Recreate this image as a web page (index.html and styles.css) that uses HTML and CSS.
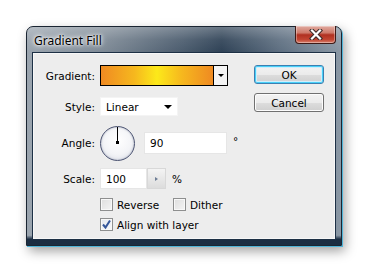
FILE: index.html
```html
<!DOCTYPE html>
<html>
<head>
<meta charset="utf-8">
<title>Gradient Fill</title>
<link rel="stylesheet" href="styles.css">
</head>
<body>
<div class="window">
  <div class="titlebar">
    <span class="title">Gradient Fill</span>
    <div class="close">
      <svg width="16" height="11" viewBox="0 0 16 11"><path d="M4 1.5 L12 9.5 M12 1.5 L4 9.5" stroke="#3a2a28" stroke-width="4.2" stroke-linecap="square"/><path d="M4 1.5 L12 9.5 M12 1.5 L4 9.5" stroke="#ffffff" stroke-width="2.2" stroke-linecap="square"/></svg>
    </div>
  </div>
  <div class="frame">
    <div class="client">
      <div class="form">
        <div class="row r-grad">
          <span class="label">Gradient:</span>
          <div class="swatch"><div class="swatch-fill"></div><div class="swatch-drop"><span class="tri-down"></span></div></div>
        </div>
        <div class="row r-style">
          <span class="label">Style:</span>
          <div class="select"><span>Linear</span><span class="tri-down"></span></div>
        </div>
        <div class="row r-angle">
          <span class="label">Angle:</span>
          <div class="dial"><div class="needle"></div><div class="hub"></div></div>
          <div class="input angle-input">90</div>
          <span class="unit deg">°</span>
        </div>
        <div class="row r-scale">
          <span class="label">Scale:</span>
          <div class="input scale-input">100</div>
          <div class="stepper"><span class="tri-right"></span></div>
          <span class="unit pct">%</span>
        </div>
        <div class="row r-check">
          <span class="check-item first"><span class="box"></span>Reverse</span>
          <span class="check-item"><span class="box"></span>Dither</span>
        </div>
        <div class="row r-check2">
          <span class="check-item"><span class="box checked"><svg width="11" height="11" viewBox="0 0 11 11"><path d="M2 5.5 L4.5 8.5 L9 1.5" stroke="#34569a" stroke-width="2" fill="none"/></svg></span>Align with layer</span>
        </div>
      </div>
      <div class="buttons">
        <div class="btn default">OK</div>
        <div class="btn">Cancel</div>
      </div>
    </div>
  </div>
</div>
</body>
</html>
```

FILE: styles.css
```css
html, body {
  margin: 0;
  padding: 0;
  background: #ffffff;
}
body {
  width: 370px;
  height: 274px;
  overflow: hidden;
  padding: 26px 0 0 26px;
  box-sizing: border-box;
}
.window {
  width: 316px;
  height: 220px;
  box-sizing: border-box;
  border: 1px solid #1a2532;
  border-radius: 7px 7px 0 0;
  background: linear-gradient(90deg, #9ba5af 0%, #7d8995 25%, #4a5b6d 50%, #2f4256 62%, #5d6e80 80%, #8b98a5 100%);
  box-shadow: 1px 1px 0 #4fb4d8, 3px 5px 12px rgba(0,0,0,0.38);
  display: flex;
  flex-direction: column;
}
.titlebar {
  height: 25px;
  display: flex;
  justify-content: space-between;
  align-items: flex-start;
  border-radius: 6px 6px 0 0;
  background: linear-gradient(180deg, rgba(255,255,255,0.28) 0%, rgba(255,255,255,0.08) 50%, rgba(0,0,0,0) 100%);
}
.title {
  font-family: "Noto Sans", "Open Sans", sans-serif;
  font-size: 12px;
  color: #000;
  padding: 5px 0 0 7px;
  text-shadow: 0 0 6px #fff, 0 0 4px #fff, 0 0 2px rgba(255,255,255,0.9);
}
.close {
  width: 41px;
  height: 18px;
  margin: -1px 5px 0 0;
  box-sizing: border-box;
  border: 1px solid #3e1a16;
  border-top: none;
  border-radius: 0 0 4px 4px;
  background: linear-gradient(180deg, #e0aaa0 0%, #cf7a6a 40%, #b03020 52%, #c24532 80%, #d7826e 100%);
  box-shadow: inset 0 0 0 1px rgba(255,255,255,0.35);
  display: flex;
  align-items: center;
  justify-content: center;
}
.frame {
  flex: 1;
  padding: 0 5px 5px 5px;
  display: flex;
  background: linear-gradient(180deg, rgba(0,0,0,0) 0%, rgba(0,0,0,0) 95%, #1b2d42 97%);
}
.client {
  flex: 1;
  border: 1px solid #1d3045;
  box-shadow: inset 0 0 0 1px #f7f7f7;
  background: #ededed;
  display: flex;
  font-family: "DejaVu Sans", Verdana, sans-serif;
  font-size: 10.5px;
  color: #000;
  padding-top: 12px;
  box-sizing: border-box;
}
.form {
  flex: 1;
  display: flex;
  flex-direction: column;
}
.row {
  display: flex;
  align-items: center;
}
.label {
  width: 62px;
  text-align: right;
  margin-right: 5px;
}
.r-grad { height: 21px; }
.r-style { height: 19px; margin-top: 11px; }
.r-angle { height: 36px; margin-top: 9px; }
.r-scale { height: 21px; margin-top: 7px; }
.r-check { height: 13px; margin-top: 9px; padding-left: 67px; }
.r-check2 { height: 13px; margin-top: 7px; padding-left: 67px; }

.swatch {
  width: 128px;
  height: 21px;
  box-sizing: border-box;
  border: 1px solid #000;
  display: flex;
}
.swatch-fill {
  flex: 1;
  background: linear-gradient(90deg, #ef8a22 0%, #f6b81e 30%, #fce91a 50%, #f6b81e 72%, #ef8a22 100%);
}
.swatch-drop {
  width: 13px;
  border-left: 1px solid #000;
  background: #f4f4f4;
  display: flex;
  align-items: center;
  justify-content: center;
}
.tri-down {
  width: 0;
  height: 0;
  border-left: 3px solid transparent;
  border-right: 3px solid transparent;
  border-top: 3px solid #000;
}
.select {
  width: 78px;
  height: 19px;
  box-sizing: border-box;
  background: #fff;
  border: 1px solid #f4f4f4;
  display: flex;
  align-items: center;
  justify-content: space-between;
  padding: 0 5px 0 5px;
}
.select .tri-down {
  border-left-width: 4px;
  border-right-width: 4px;
  border-top-width: 4px;
}
.dial {
  width: 35px;
  height: 35px;
  box-sizing: border-box;
  border-radius: 50%;
  border: 1.5px solid #4d5573;
  background: radial-gradient(circle at 50% 40%, #ffffff 0%, #f3f4f7 55%, #d9dce6 100%);
  box-shadow: inset 0 0 2px rgba(80,90,120,0.5);
  display: flex;
  flex-direction: column;
  align-items: center;
}
.needle {
  width: 1px;
  height: 16px;
  background: #000;
}
.hub {
  width: 3px;
  height: 3px;
  background: #000;
  margin-top: -2px;
}
.input {
  background: #fff;
  border: 1px solid #e6e6e6;
  box-sizing: border-box;
  display: flex;
  align-items: center;
  padding-left: 5px;
}
.angle-input {
  width: 83px;
  height: 22px;
  margin-left: 9px;
}
.deg {
  margin-left: 6px;
  margin-top: -4px;
}
.scale-input {
  width: 47px;
  height: 21px;
}
.stepper {
  width: 19px;
  height: 21px;
  box-sizing: border-box;
  border: 1px solid #d8d8d8;
  background: linear-gradient(180deg, #f4f4f4, #dcdcdc);
  display: flex;
  align-items: center;
  justify-content: center;
}
.tri-right {
  width: 0;
  height: 0;
  border-top: 2.5px solid transparent;
  border-bottom: 2.5px solid transparent;
  border-left: 3px solid #6d7e96;
}
.pct {
  margin-left: 6px;
}
.check-item {
  display: flex;
  align-items: center;
  height: 13px;
}
.check-item.first {
  width: 73px;
}
.box {
  width: 13px;
  height: 13px;
  box-sizing: border-box;
  border: 1px solid #8e8f8f;
  background: linear-gradient(135deg, #dedede 0%, #f4f4f4 100%);
  box-shadow: inset 0 0 0 1px #f8f8f8;
  margin-right: 4px;
  display: flex;
  align-items: center;
  justify-content: center;
}
.box.checked {
  background: linear-gradient(135deg, #e4e7ee 0%, #f7f8fa 100%);
}
.buttons {
  width: 70px;
  margin-right: 11px;
  display: flex;
  flex-direction: column;
  gap: 9px;
}
.btn {
  height: 19px;
  box-sizing: border-box;
  border: 1px solid #707070;
  border-radius: 3px;
  background: linear-gradient(180deg, #f3f3f3 0%, #ebebeb 50%, #dddddd 51%, #cfcfcf 100%);
  box-shadow: inset 0 0 0 1px #fcfcfc;
  display: flex;
  align-items: center;
  justify-content: center;
  font-family: "DejaVu Sans", Verdana, sans-serif;
  font-size: 10.5px;
}
.btn.default {
  border-color: #3c7fb1;
  box-shadow: inset 0 0 0 1px #48d0f8, inset 0 0 0 2px #cfeefc;
}
```
